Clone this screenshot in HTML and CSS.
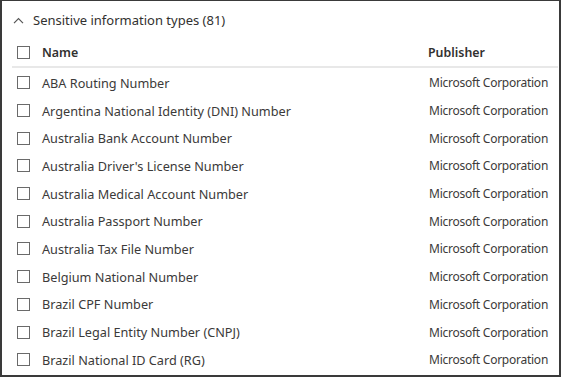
FILE: index.html
```html
<!DOCTYPE html>
<html lang="en">
<head>
  <meta charset="UTF-8" />
  <title>Sensitive information types</title>
  <link rel="stylesheet" href="styles.css">
</head>
<body>
  <div class="frame">
    <div class="section-head">
      <svg class="chevron" width="11" height="7" viewBox="0 0 11 7"><path d="M1 6.2 L5.5 1.5 L10 6.2" fill="none" stroke="#555" stroke-width="1.2"/></svg>
      <span>Sensitive information types (81)</span>
    </div>
    <div class="row head">
      <span class="check"></span>
      <span class="name">Name</span>
      <span class="pub">Publisher</span>
    </div>
    <div class="rows">
      <div class="row"><span class="check"></span><span class="name">ABA Routing Number</span><span class="pub">Microsoft Corporation</span></div>
      <div class="row"><span class="check"></span><span class="name">Argentina National Identity (DNI) Number</span><span class="pub">Microsoft Corporation</span></div>
      <div class="row"><span class="check"></span><span class="name">Australia Bank Account Number</span><span class="pub">Microsoft Corporation</span></div>
      <div class="row"><span class="check"></span><span class="name">Australia Driver's License Number</span><span class="pub">Microsoft Corporation</span></div>
      <div class="row"><span class="check"></span><span class="name">Australia Medical Account Number</span><span class="pub">Microsoft Corporation</span></div>
      <div class="row"><span class="check"></span><span class="name">Australia Passport Number</span><span class="pub">Microsoft Corporation</span></div>
      <div class="row"><span class="check"></span><span class="name">Australia Tax File Number</span><span class="pub">Microsoft Corporation</span></div>
      <div class="row"><span class="check"></span><span class="name">Belgium National Number</span><span class="pub">Microsoft Corporation</span></div>
      <div class="row"><span class="check"></span><span class="name">Brazil CPF Number</span><span class="pub">Microsoft Corporation</span></div>
      <div class="row"><span class="check"></span><span class="name">Brazil Legal Entity Number (CNPJ)</span><span class="pub">Microsoft Corporation</span></div>
      <div class="row"><span class="check"></span><span class="name">Brazil National ID Card (RG)</span><span class="pub">Microsoft Corporation</span></div>
    </div>
  </div>
</body>
</html>
```

FILE: styles.css
```css
body {
  margin: 0;
  background: white;
  font-family: 'Noto Sans', sans-serif;
  color: #3b3a39;
}
.frame {
  width: 557px;
  height: 374px;
  border: 2px solid #3a3a3a;
  border-top-width: 1px;
  overflow: hidden;
}
.section-head {
  display: flex;
  align-items: center;
  height: 38px;
  padding-left: 11px;
  font-size: 13px;
  color: #323130;
}
.chevron {
  margin-right: 9px;
}
.row {
  display: flex;
  align-items: center;
  height: 27.7px;
  font-size: 12.7px;
}
.row.head {
  height: 27px;
  font-size: 12.4px;
  font-weight: 600;
  color: #323130;
  border-bottom: 2px solid #e8e8e8;
  margin-left: 10px;
  margin-right: 1px;
}
.row.head .check {
  margin-left: 5px;
}
.rows {
  padding-top: 1px;
}
.check {
  width: 11px;
  height: 11px;
  border: 1px solid #6a6a6a;
  margin-left: 15px;
  margin-right: 12px;
  flex: none;
}
.name {
  flex: 1;
}
.pub {
  width: 130px;
  font-size: 12px;
  letter-spacing: -0.25px;
}
.row.head .pub {
  font-size: 12.4px;
  letter-spacing: 0;
}
```
